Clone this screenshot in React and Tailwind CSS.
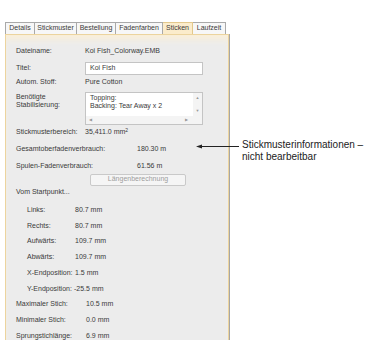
import React from "react";

const tabs = [
  { label: "Details", w: "w-[30px]" },
  { label: "Stickmuster", w: "w-[42px]" },
  { label: "Bestellung", w: "w-[39px]" },
  { label: "Fadenfarben", w: "w-[47px]" },
  { label: "Sticken", w: "w-[30px]", active: true },
  { label: "Laufzeit", w: "w-[33px]" },
];

const offsets = [
  { label: "Links:", value: "80.7 mm" },
  { label: "Rechts:", value: "80.7 mm" },
  { label: "Aufwärts:", value: "109.7 mm" },
  { label: "Abwärts:", value: "109.7 mm" },
  { label: "X-Endposition:", value: "1.5 mm" },
  { label: "Y-Endposition:", value: "-25.5 mm", tight: true },
];

const stitches = [
  { label: "Maximaler Stich:", value: "10.5 mm" },
  { label: "Minimaler Stich:", value: "0.0 mm" },
  { label: "Sprungstichlänge:", value: "6.9 mm" },
];

const Row = ({ label, children, className = "" }) => (
  <div className={`flex items-center h-[12px] ${className}`}>
    <span className="w-[69px] shrink-0">{label}</span>
    {children}
  </div>
);

export default function App() {
  return (
    <div
      className="relative w-[372px] h-[340px] bg-white overflow-hidden flex"
      style={{ fontFamily: '"Liberation Sans", Arial, sans-serif' }}
    >
      {/* Dialog */}
      <div className="ml-[5px] mt-[22px] w-[224px] flex flex-col text-[7px] text-[#3a3a3a]">
        {/* Tabs */}
        <div className="flex h-[14px]">
          {tabs.map((t) => (
            <div
              key={t.label}
              className={`${t.w} flex items-center justify-center border-t border-r border-[#a9a9a9] first:border-l ${
                t.active ? "bg-[#fbeccb] border-[#e3c88c]" : "bg-[#f7f7f7]"
              }`}
            >
              {t.label}
            </div>
          ))}
        </div>

        {/* Panel */}
        <div className="flex-1 bg-[#ececec] border-l border-t border-r border-[#ecd49e] shadow-[inset_0_7px_7px_-3px_#fbefd6,1px_0_0_#a6a6a6] pl-[10px] pt-[11px] flex flex-col">
          <Row label="Dateiname:">
            <span>Koi Fish_Colorway.EMB</span>
          </Row>

          <div className="flex mt-[4px] h-[13px]">
            <span className="w-[69px] shrink-0 pt-[1px]">Titel:</span>
            <div className="w-[118px] bg-white border border-[#c4c4c4] flex items-center pl-[4px]">
              Koi Fish
            </div>
          </div>

          <Row label="Autom. Stoff:" className="mt-[2px]">
            <span>Pure Cotton</span>
          </Row>

          <div className="flex mt-[3px]">
            <span className="w-[69px] shrink-0 leading-[8px] pt-[1px]">
              Benötigte
              <br />
              Stabilisierung:
            </span>
            <div className="w-[118px] h-[33px] bg-white border border-[#c4c4c4] flex flex-col">
              <div className="flex flex-1">
                <div className="flex-1 pl-[4px] pt-[1px] leading-[8px]">
                  Topping:
                  <br />
                  Backing: Tear Away x 2
                </div>
                <div className="w-[9px] bg-[#f4f4f4] flex flex-col items-center justify-between py-[2px] text-[4px] text-[#9a9a9a]">
                  <span>▲</span>
                  <span>▼</span>
                </div>
              </div>
              <div className="h-[8px] bg-[#f4f4f4] flex items-center justify-between px-[3px] pr-[14px] text-[4px] text-[#9a9a9a]">
                <span>◀</span>
                <span>▶</span>
              </div>
            </div>
          </div>

          <Row label="Stickmusterbereich:" className="mt-[2px]">
            <span>
              35,411.0 mm<sup className="text-[5px]">2</sup>
            </span>
          </Row>

          <div className="flex items-center h-[12px] mt-[5px]">
            <span className="w-[121px] shrink-0">Gesamtoberfadenverbrauch:</span>
            <span>180.30 m</span>
          </div>

          <div className="flex items-center h-[12px] mt-[5px]">
            <span className="w-[121px] shrink-0">Spulen-Fadenverbrauch:</span>
            <span>61.56 m</span>
          </div>

          <div className="ml-[74px] mt-[1px] w-[96px] h-[12px] bg-[#f5f5f5] border border-[#c9c9c9] rounded-[2px] flex items-center justify-center text-[#9d9d9d]">
            Längenberechnung
          </div>

          <div className="h-[13px] flex items-center">Vom Startpunkt...</div>

          <div className="flex flex-col mt-[4px]">
            {offsets.map((o) => (
              <div key={o.label} className="flex items-center h-[15.7px] pl-[11px]">
                <span className={`${o.tight ? "w-[47px]" : "w-[48px]"} shrink-0`}>{o.label}</span>
                <span>{o.value}</span>
              </div>
            ))}
            {stitches.map((s) => (
              <div key={s.label} className="flex items-center h-[15.7px]">
                <span className="w-[70px] shrink-0">{s.label}</span>
                <span>{s.value}</span>
              </div>
            ))}
          </div>
        </div>
      </div>

      {/* Annotation */}
      <div className="absolute left-[196px] top-[143px] flex items-start">
        <svg width="44" height="7" viewBox="0 0 44 7">
          <line x1="3" y1="3.5" x2="43" y2="3.5" stroke="#222" strokeWidth="1" />
          <path d="M0 3.5 L6 1.5 L6 5.5 Z" fill="#222" />
        </svg>
        <div className="ml-[2px] -mt-[4px] text-[10px] leading-[12px] text-[#222]">
          Stickmusterinformationen –
          <br />
          nicht bearbeitbar
        </div>
      </div>
    </div>
  );
}
